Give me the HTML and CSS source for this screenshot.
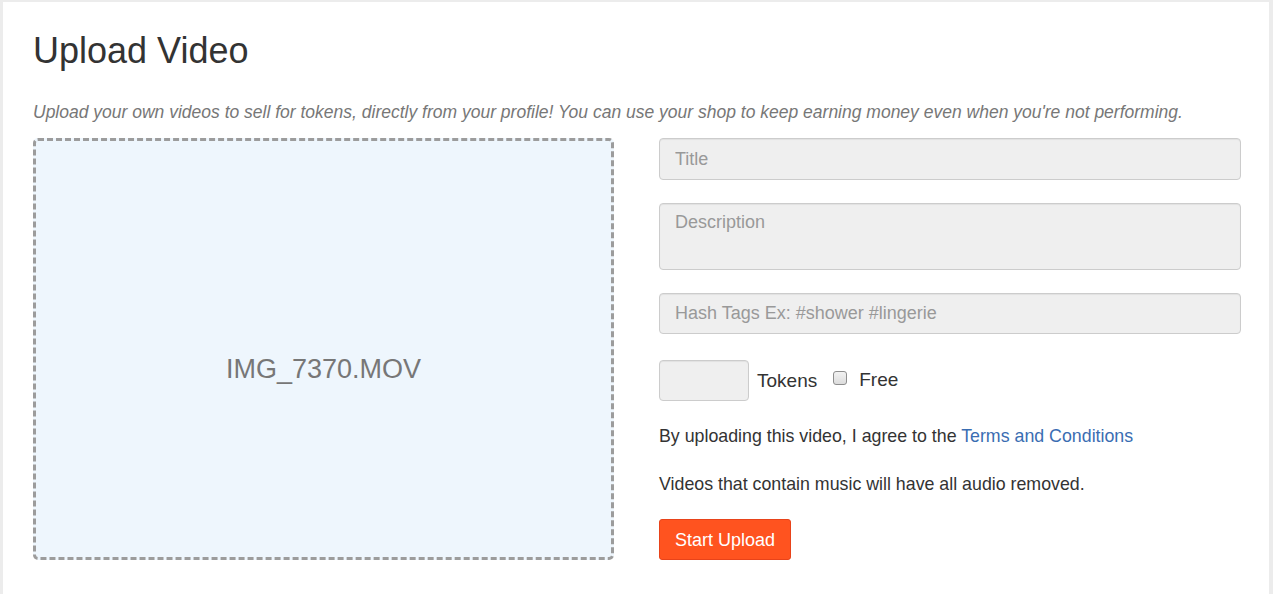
FILE: index.html
```html
<!DOCTYPE html>
<html>
<head>
<meta charset="utf-8">
<link rel="stylesheet" href="styles.css">
</head>
<body>
<div class="panel">
  <h1 class="title">Upload Video</h1>
  <p class="lead">Upload your own videos to sell for tokens, directly from your profile! You can use your shop to keep earning money even when you're not performing.</p>
  <div class="grid">
    <div class="dropzone"><span class="filename">IMG_7370.MOV</span></div>
    <form class="form">
      <input class="field f-title" type="text" placeholder="Title">
      <textarea class="field f-desc" placeholder="Description"></textarea>
      <input class="field f-tags" type="text" placeholder="Hash Tags Ex: #shower #lingerie">
      <div class="price-row">
        <input class="field f-tokens" type="text">
        <span class="lbl">Tokens</span>
        <label class="free"><input class="check" type="checkbox"><span class="lbl">Free</span></label>
      </div>
      <p class="note agree">By uploading this video, I agree to the <a href="#" class="link">Terms and Conditions</a></p>
      <p class="note music">Videos that contain music will have all audio removed.</p>
      <div><button type="button" class="btn">Start Upload</button></div>
    </form>
  </div>
</div>
</body>
</html>
```
FILE: styles.css
```css
html, body {
  margin: 0;
  padding: 0;
  background: #ececec;
  height: 100%;
  overflow: hidden;
}
body {
  font-family: "Liberation Sans", Arial, sans-serif;
  color: #333;
}
.panel {
  margin: 2px 4px 0 3px;
  background: #fff;
  padding: 29px 28px 40px 30px;
  min-height: 600px;
  box-sizing: border-box;
}
.title {
  margin: 0;
  font-size: 36px;
  font-weight: 400;
  line-height: 40px;
  color: #333;
}
.lead {
  margin: 30px 0 0;
  font-size: 17.5px;
  font-style: italic;
  color: #777;
  line-height: 22px;
}
.grid {
  display: grid;
  grid-template-columns: 581px 1fr;
  column-gap: 45px;
  margin-top: 15px;
}
.dropzone {
  height: 422px;
  box-sizing: border-box;
  border: 3px dashed #9c9c9c;
  border-radius: 5px;
  background: #eef6fd;
  display: flex;
  align-items: center;
  justify-content: center;
  padding-top: 40px;
}
.filename {
  font-size: 27px;
  color: #777;
}
.form {
  display: flex;
  flex-direction: column;
}
.field {
  box-sizing: border-box;
  width: 100%;
  background: #efefef;
  border: 1px solid #ccc;
  border-radius: 4px;
  font-family: "Liberation Sans", Arial, sans-serif;
  font-size: 18px;
  color: #555;
  padding: 0 15px;
  margin: 0;
  outline: none;
  box-shadow: inset 0 1px 1px rgba(0,0,0,0.06);
}
.field::placeholder { color: #999; }
.f-title { height: 42px; }
.f-desc {
  height: 67px;
  margin-top: 23px;
  padding-top: 8px;
  resize: none;
  display: block;
}
.f-tags { height: 41px; margin-top: 23px; }
.price-row {
  display: flex;
  align-items: center;
  margin-top: 26px;
  height: 41px;
}
.f-tokens { width: 90px; height: 41px; flex: none; }
.lbl {
  font-size: 19px;
  color: #333;
}
.price-row > .lbl { margin-left: 8px; }
.free {
  display: flex;
  align-items: center;
  margin-left: 16px;
  margin-top: -2px;
}
.check {
  appearance: none;
  -webkit-appearance: none;
  width: 14px;
  height: 14px;
  margin: 0 12px 0 0;
  border: 1px solid #8e8e8e;
  border-radius: 3px;
  background: linear-gradient(#f2f2f2, #dcdcdc);
  position: relative;
  top: -2px;
}
.note {
  margin: 0;
  font-size: 17.8px;
  line-height: 22px;
  color: #333;
}
.agree { margin-top: 24px; }
.music { margin-top: 26px; }
.link { color: #3a6db2; text-decoration: none; }
.btn {
  margin-top: 24px;
  height: 41px;
  width: 132px;
  background: #ff531f;
  border: 1px solid #e8431a;
  border-radius: 3px;
  color: #fff;
  font-family: "Liberation Sans", Arial, sans-serif;
  font-size: 18px;
  padding: 0;
  line-height: 1;
}
```
